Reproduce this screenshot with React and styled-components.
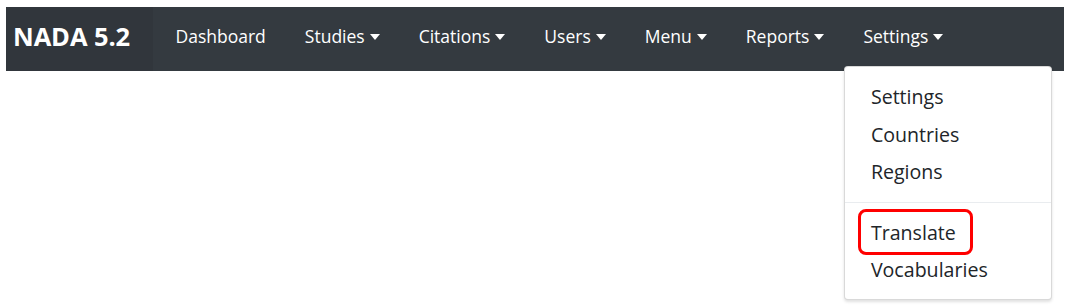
import React from 'react';
import styled, { createGlobalStyle } from 'styled-components';

const GlobalStyle = createGlobalStyle`
  html, body {
    margin: 0;
    padding: 0;
    background: #ffffff;
  }
  body {
    font-family: "Open Sans", "Noto Sans", Arial, sans-serif;
  }
`;

const Page = styled.div`
  padding: 7px 8px 0 6px;
  height: 308px;
  box-sizing: border-box;
`;

const Navbar = styled.nav`
  display: flex;
  align-items: stretch;
  height: 64px;
  background: #343a40;
`;

const Brand = styled.div`
  display: flex;
  align-items: center;
  width: 147px;
  box-sizing: border-box;
  padding: 0 0 6px 7px;
  background: #31363c;
  color: #ffffff;
  font-size: 25.5px;
  font-weight: 700;
  letter-spacing: -0.1px;
`;

const NavList = styled.ul`
  display: flex;
  align-items: stretch;
  list-style: none;
  margin: 0;
  padding: 0 0 0 3px;
`;

const NavItem = styled.li`
  position: relative;
  display: flex;
  align-items: center;
  padding-bottom: 6px;
`;

const NavLink = styled.a`
  display: flex;
  align-items: center;
  padding: 0 19.5px;
  color: #ffffff;
  font-size: 17.5px;
  text-decoration: none;
  cursor: pointer;

  ${props => props.$caret && `
    &::after {
      content: '';
      display: inline-block;
      margin-left: 5px;
      border-top: 6px solid #ffffff;
      border-left: 5.5px solid transparent;
      border-right: 5.5px solid transparent;
      margin-top: 1px;
    }
  `}
`;

const DropdownMenu = styled.div`
  position: absolute;
  top: 59px;
  left: 0;
  width: 208px;
  box-sizing: border-box;
  padding: 11px 0 10px;
  background: #ffffff;
  border: 1px solid rgba(0, 0, 0, 0.15);
  border-radius: 4px;
  box-shadow: 0 2px 3px rgba(0, 0, 0, 0.12);
  z-index: 10;
`;

const DropdownItem = styled.a`
  display: block;
  height: 37.5px;
  line-height: 37.5px;
  padding: 0 26px;
  color: #212529;
  font-size: 19.6px;
  text-decoration: none;
  white-space: nowrap;

  span {
    display: inline-block;
    position: relative;
    height: 37.5px;
  }

  ${props => props.$highlighted && `
    span::after {
      content: '';
      position: absolute;
      left: -13px;
      right: -17px;
      top: -5px;
      bottom: -4px;
      border: 3px solid #ff0000;
      border-radius: 8px;
    }
  `}
`;

const Divider = styled.div`
  height: 1px;
  margin: 11px 0;
  background: #e9ecef;
`;

const navItems = [
  { label: 'Dashboard' },
  { label: 'Studies', caret: true },
  { label: 'Citations', caret: true },
  { label: 'Users', caret: true },
  { label: 'Menu', caret: true },
  { label: 'Reports', caret: true },
  { label: 'Settings', caret: true, open: true },
];

const settingsMenu = [
  ['Settings', 'Countries', 'Regions'],
  ['Translate', 'Vocabularies'],
];

function App() {
  return (
    <>
      <GlobalStyle />
      <Page>
        <Navbar>
          <Brand>NADA 5.2</Brand>
          <NavList>
            {navItems.map(item => (
              <NavItem key={item.label}>
                <NavLink $caret={item.caret}>{item.label}</NavLink>
                {item.open && (
                  <DropdownMenu>
                    {settingsMenu.map((group, i) => (
                      <React.Fragment key={i}>
                        {i > 0 && <Divider />}
                        {group.map(entry => (
                          <DropdownItem key={entry} $highlighted={entry === 'Translate'}>
                            <span>{entry}</span>
                          </DropdownItem>
                        ))}
                      </React.Fragment>
                    ))}
                  </DropdownMenu>
                )}
              </NavItem>
            ))}
          </NavList>
        </Navbar>
      </Page>
    </>
  );
}

export default App;
